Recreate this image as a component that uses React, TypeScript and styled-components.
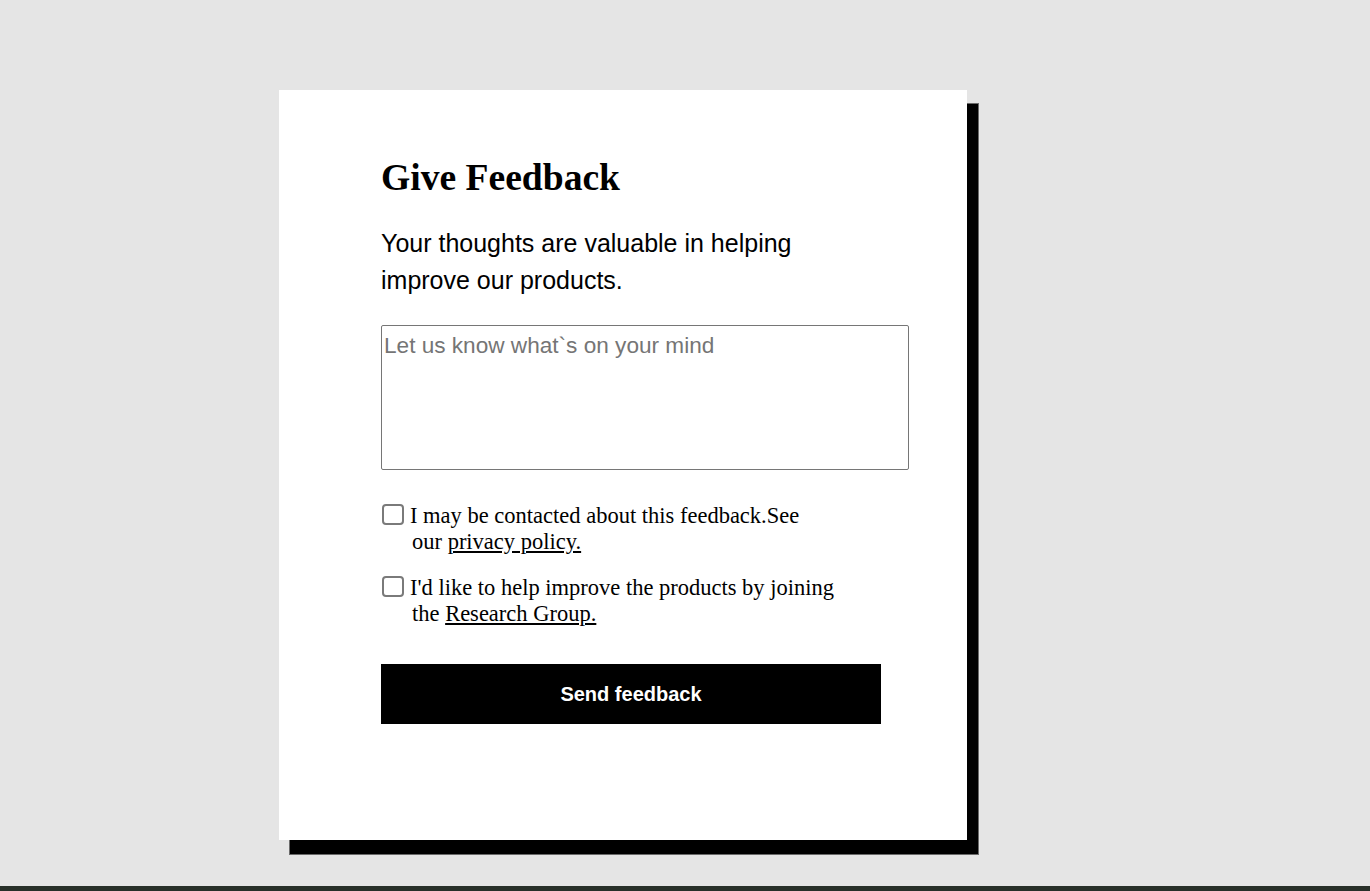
import React from "react";
import styled, { createGlobalStyle } from "styled-components";

const GlobalStyle = createGlobalStyle`
  html, body {
    margin: 0;
    padding: 0;
    height: 100%;
    overflow: hidden;
  }
  body {
    background: #e5e5e5;
    font-family: "Liberation Sans", Arial, sans-serif;
  }
  * { box-sizing: border-box; }
`;

const Page = styled.div`
  display: flex;
  flex-direction: column;
  height: 100vh;
`;

const Main = styled.main`
  flex: 1;
  background: #e5e5e5;
  padding: 90px 0 0 279px;
`;

const Footer = styled.footer`
  height: 5px;
  background: #283029;
`;

const Card = styled.section`
  width: 688px;
  height: 750px;
  background: #ffffff;
  padding: 66px 58px 0 102px;
  box-shadow: 11px 14px 0 0 #000000, 11px 14px 0 1px #6a6a6a;
`;

const Title = styled.h1`
  margin: 0;
  font-family: "Liberation Serif", "Times New Roman", serif;
  font-weight: 700;
  font-size: 37.6px;
  line-height: normal;
  color: #000;
`;

const Intro = styled.p`
  margin: 25.5px 0 0;
  max-width: 460px;
  font-family: "Liberation Sans", Arial, sans-serif;
  font-size: 25px;
  line-height: 1.5;
  color: #000;
`;

const Message = styled.textarea`
  display: block;
  margin-top: 25.5px;
  width: 528px;
  height: 145px;
  padding: 3px 2px;
  border: 1px solid #767676;
  border-radius: 2px;
  resize: none;
  font-family: "Liberation Sans", Arial, sans-serif;
  font-size: 22.6px;
  line-height: 1.5;
  color: #000;
  background: #fff;
  &::placeholder {
    color: #757575;
    opacity: 1;
  }
`;

const Options = styled.div`
  display: flex;
  flex-direction: column;
  gap: 20px;
  margin-top: 32.5px;
`;

const OptionRow = styled.label`
  display: flex;
  align-items: flex-start;
  gap: 6px;
  font-family: "Liberation Serif", "Times New Roman", serif;
  font-size: 22.5px;
  line-height: normal;
  color: #000;
`;

const Box = styled.input`
  appearance: none;
  -webkit-appearance: none;
  flex: none;
  width: 22px;
  height: 21px;
  margin: 1px 0 0 1px;
  border: 2px solid #7a7a7a;
  border-radius: 4px;
  background: #fff;
  cursor: pointer;
  &:checked {
    background: #000;
    border-color: #000;
  }
`;

const OptionText = styled.span`
  padding-left: 2px;
  text-indent: -2px;
  white-space: nowrap;
`;

const TextLink = styled.a`
  color: #000;
  text-decoration: underline;
`;

const SendButton = styled.button`
  display: flex;
  align-items: center;
  justify-content: center;
  margin-top: 37.7px;
  width: 500px;
  height: 60px;
  border: none;
  border-radius: 0;
  background: #000;
  color: #fff;
  font-family: "Liberation Sans", Arial, sans-serif;
  font-weight: 700;
  font-size: 20px;
  cursor: pointer;
`;

export default function App() {
  return (
    <>
      <GlobalStyle />
      <Page>
        <Main>
          <Card>
            <Title>Give Feedback</Title>
            <Intro>Your thoughts are valuable in helping improve our products.</Intro>
            <Message placeholder="Let us know what`s on your mind" />
            <Options>
              <OptionRow>
                <Box type="checkbox" />
                <OptionText>
                  I may be contacted about this feedback.See
                  <br />
                  our <TextLink href="#">privacy policy.</TextLink>
                </OptionText>
              </OptionRow>
              <OptionRow>
                <Box type="checkbox" />
                <OptionText>
                  I'd like to help improve the products by joining
                  <br />
                  the <TextLink href="#">Research Group.</TextLink>
                </OptionText>
              </OptionRow>
            </Options>
            <SendButton type="button">Send feedback</SendButton>
          </Card>
        </Main>
        <Footer />
      </Page>
    </>
  );
}
